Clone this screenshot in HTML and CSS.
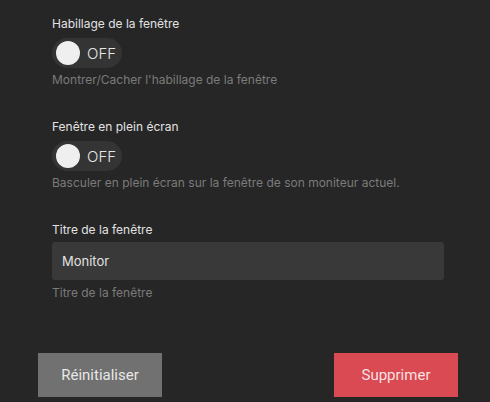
FILE: index.html
```html
<!DOCTYPE html>
<html lang="fr">
<head>
    <meta charset="UTF-8">
    <meta name="viewport" content="width=device-width, initial-scale=1.0">
    <title>Paramètres de la fenêtre</title>
    <link rel="stylesheet" href="styles.css">
</head>
<body>

<div class="settings">
    <!-- Habillage -->
    <div class="field">
        <div class="field-label">Habillage de la fenêtre</div>
        <div class="toggle">
            <span class="knob"></span>
            <span class="toggle-text">OFF</span>
        </div>
        <div class="field-help">Montrer/Cacher l'habillage de la fenêtre</div>
    </div>

    <!-- Plein écran -->
    <div class="field">
        <div class="field-label">Fenêtre en plein écran</div>
        <div class="toggle">
            <span class="knob"></span>
            <span class="toggle-text">OFF</span>
        </div>
        <div class="field-help">Basculer en plein écran sur la fenêtre de son moniteur actuel.</div>
    </div>

    <!-- Titre -->
    <div class="field">
        <div class="field-label">Titre de la fenêtre</div>
        <input type="text" class="text-input" value="Monitor">
        <div class="field-help help-input">Titre de la fenêtre</div>
    </div>
</div>

<div class="actions">
    <button class="btn btn-reset">Réinitialiser</button>
    <button class="btn btn-delete">Supprimer</button>
</div>

</body>
</html>
```

FILE: styles.css
```css
body {
    margin: 0;
    padding: 0;
    background-color: #262626;
    font-family: Inter, "Noto Sans", sans-serif;
    height: 402px;
    overflow: hidden;
}
.settings {
    padding: 16px 46px 0 52px;
}
.field {
    margin-bottom: 31px;
}
.field-label {
    font-size: 12px;
    line-height: 16px;
    color: #e2e2e2;
}
.toggle {
    display: flex;
    align-items: center;
    width: 70px;
    height: 30px;
    margin-top: 6px;
    padding: 0 4px;
    box-sizing: border-box;
    border-radius: 15px;
    background-color: #343434;
}
.knob {
    width: 24px;
    height: 24px;
    border-radius: 50%;
    background-color: #efefef;
}
.toggle-text {
    margin-left: 7px;
    font-size: 15px;
    font-weight: 300;
    color: #e6e6e6;
}
.field-help {
    margin-top: 4px;
    font-size: 12px;
    line-height: 16px;
    color: #7b7b7b;
}
.text-input {
    display: block;
    width: 100%;
    height: 38px;
    margin-top: 4px;
    padding: 0 10px;
    box-sizing: border-box;
    border: none;
    border-radius: 3px;
    background-color: #393939;
    color: #e2e2e2;
    font-family: Inter, "Noto Sans", sans-serif;
    font-size: 13px;
    outline: none;
}
.help-input {
    margin-top: 5px;
}
.actions {
    display: flex;
    justify-content: space-between;
    margin-top: 52px;
    padding: 0 32px 0 38px;
}
.btn {
    width: 124px;
    height: 44px;
    border: none;
    border-radius: 0;
    font-family: Roboto, "Liberation Sans", sans-serif;
    font-size: 15px;
    color: rgba(255, 255, 255, 0.85);
    cursor: pointer;
}
.btn-reset {
    background-color: #717171;
}
.btn-delete {
    background-color: #d94a53;
}
```
